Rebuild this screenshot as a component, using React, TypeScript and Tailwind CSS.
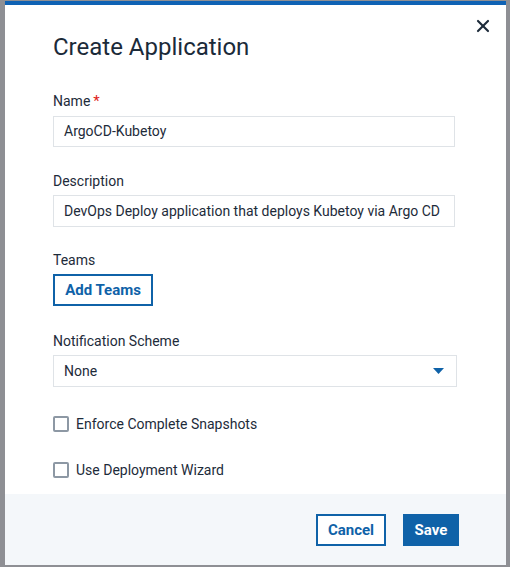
import { X } from "lucide-react"

const Label = ({ children, required }: { children: string; required?: boolean }) => (
	<label className="block text-[14px] leading-5 text-[#1d2b3a]">
		{children}
		{required && <span className="ml-[3px] text-[15px] text-[#e0221b]">*</span>}
	</label>
)

const Checkbox = ({ label }: { label: string }) => (
	<div className="flex items-center gap-[7px]">
		<span className="w-4 h-4 border-2 border-[#8d98a4] rounded-[2px] bg-white" />
		<span className="text-[14px] leading-5 text-[#1d2b3a]">{label}</span>
	</div>
)

export default function App() {
	return (
		<div
			className="w-[510px] h-[567px] overflow-hidden bg-[#8e8f94] pt-px pb-[2px] pl-[5px] pr-[4px]"
			style={{ fontFamily: "Roboto, 'Noto Sans', sans-serif" }}
		>
			<div className="relative h-full flex flex-col bg-white border-t-4 border-[#0f62b4]">
				<button className="absolute top-[11px] right-[13px] text-[#1d2b3a]">
					<X size={20} strokeWidth={2.6} />
				</button>

				<div className="flex-1 pl-[48px] pr-[49px] pt-[26px]">
					<h1 className="text-[24px] leading-8 text-[#1b2a39]">Create Application</h1>

					<div className="mt-[28px]">
						<Label required>Name</Label>
						<div className="mt-[5px] h-[31px] w-[402px] border border-[#dfe3e7] flex items-center pl-[10px] text-[14px] text-[#1d2b3a]">
							ArgoCD-Kubetoy
						</div>
					</div>

					<div className="mt-[24px]">
						<Label>Description</Label>
						<div className="mt-[4px] h-[32px] w-[402px] border border-[#dfe3e7] flex items-center pl-[10px] text-[14px] text-[#1d2b3a] whitespace-nowrap overflow-hidden">
							DevOps Deploy application that deploys Kubetoy via Argo CD
						</div>
					</div>

					<div className="mt-[23px]">
						<Label>Teams</Label>
						<button className="mt-[4px] h-[32px] w-[100px] border-2 border-[#0f62a8] text-[15px] font-bold text-[#0f62a8]">
							Add Teams
						</button>
					</div>

					<div className="mt-[25px]">
						<Label>Notification Scheme</Label>
						<div className="mt-[4px] h-[32px] w-[404px] border border-[#dfe3e7] flex items-center justify-between pl-[10px] pr-[12px] text-[14px] text-[#1d2b3a]">
							<span>None</span>
							<svg width="11" height="6" viewBox="0 0 11 6">
								<path d="M0 0h11L5.5 6z" fill="#0f62a8" />
							</svg>
						</div>
					</div>

					<div className="mt-[27px] flex flex-col gap-[26px]">
						<Checkbox label="Enforce Complete Snapshots" />
						<Checkbox label="Use Deployment Wizard" />
					</div>
				</div>

				<div className="h-[71px] bg-[#f4f7fa] flex items-start justify-end gap-[17px] pt-[20px] pr-[47px]">
					<button className="h-[32px] w-[70px] border-2 border-[#0f62a8] bg-white text-[15px] font-bold text-[#0f62a8]">
						Cancel
					</button>
					<button className="h-[32px] w-[56px] bg-[#0f62a8] text-[15px] font-bold text-white">
						Save
					</button>
				</div>
			</div>
		</div>
	)
}
